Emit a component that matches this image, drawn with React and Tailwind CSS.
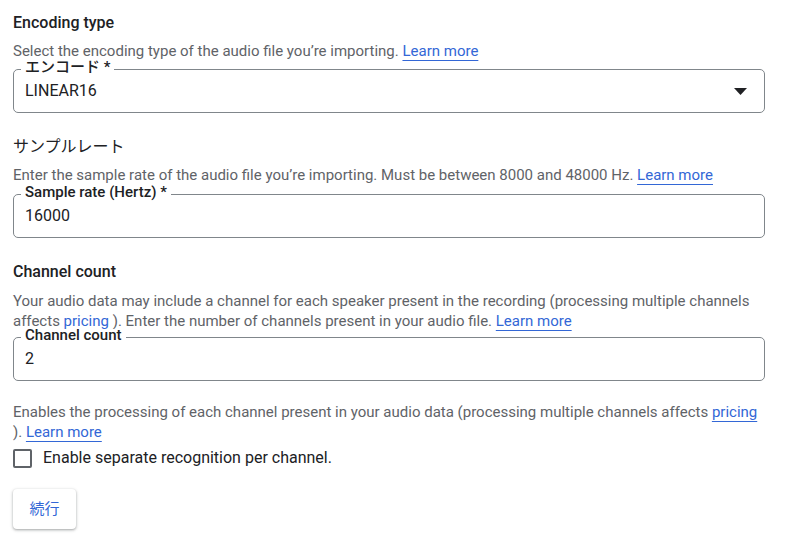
import React from "react"

const font = { fontFamily: "Roboto, 'Noto Sans CJK JP', sans-serif" }

function LearnMore({ children = "Learn more" }) {
  return (
    <a href="#" className="text-[#3367d6] underline decoration-[#3367d6] underline-offset-[4px]">
      {children}
    </a>
  )
}

function OutlinedField({ label, value, select }) {
  return (
    <div className="relative h-[44px] rounded-[5px] border border-[#80868b] flex items-center pl-[11px] pr-[17px]">
      <span className="absolute left-[7px] top-[-9px] bg-white px-[4px] text-[15px] leading-[12px] font-medium text-[#202124]">
        {label}
      </span>
      <span className="flex-1 text-[16px] text-[#202124]">{value}</span>
      {select && (
        <svg width="13" height="7" viewBox="0 0 13 7" className="mt-[1px]">
          <path d="M0 0h13L6.5 7z" fill="#202124" />
        </svg>
      )}
    </div>
  )
}

export default function App() {
  return (
    <div className="bg-white min-h-screen w-[795px] h-[536px] overflow-hidden text-[#202124]" style={font}>
      <div className="pl-[13px] pr-[30px] pt-[11px]">
        {/* Encoding type */}
        <h3 className="text-[16px] leading-6 font-medium">Encoding type</h3>
        <p className="mt-[6px] text-[15px] leading-5 text-[#5f6368]">
          Select the encoding type of the audio file you’re importing. <LearnMore />
        </p>
        <div className="mt-[8px]">
          <OutlinedField label="エンコード *" value="LINEAR16" select />
        </div>

        {/* Sample rate */}
        <h3 className="mt-[22px] text-[16px] leading-6 font-normal">サンプルレート</h3>
        <p className="mt-[6px] text-[15px] leading-5 text-[#5f6368]">
          Enter the sample rate of the audio file you’re importing. Must be between 8000 and 48000 Hz. <LearnMore />
        </p>
        <div className="mt-[9px]">
          <OutlinedField label="Sample rate (Hertz) *" value="16000" />
        </div>

        {/* Channel count */}
        <h3 className="mt-[22px] text-[16px] leading-6 font-medium">Channel count</h3>
        <p className="mt-[7px] text-[15px] leading-5 text-[#5f6368]">
          Your audio data may include a channel for each speaker present in the recording (processing multiple channels affects <span className="text-[#3367d6]">pricing</span> ). Enter the number of channels present in your audio file. <LearnMore />
        </p>
        <div className="mt-[6px]">
          <OutlinedField label="Channel count" value="2" />
        </div>

        <p className="mt-[21px] text-[15px] leading-5 text-[#5f6368]">
          Enables the processing of each channel present in your audio data (processing multiple channels affects <LearnMore>pricing</LearnMore> ). <LearnMore />
        </p>
        <label className="mt-[4px] flex items-center gap-[11px]">
          <span className="w-[19px] h-[19px] rounded-[2px] border-2 border-[#5f6368] bg-white" />
          <span className="text-[16px] leading-6 text-[#202124]">Enable separate recognition per channel.</span>
        </label>

        <button className="mt-[19px] w-[63px] h-[40px] rounded-[4px] bg-white text-[15px] text-[#3367d6] shadow-[0_1px_2px_rgba(60,64,67,0.3),0_1px_3px_1px_rgba(60,64,67,0.15)]">
          続行
        </button>
      </div>
    </div>
  )
}
